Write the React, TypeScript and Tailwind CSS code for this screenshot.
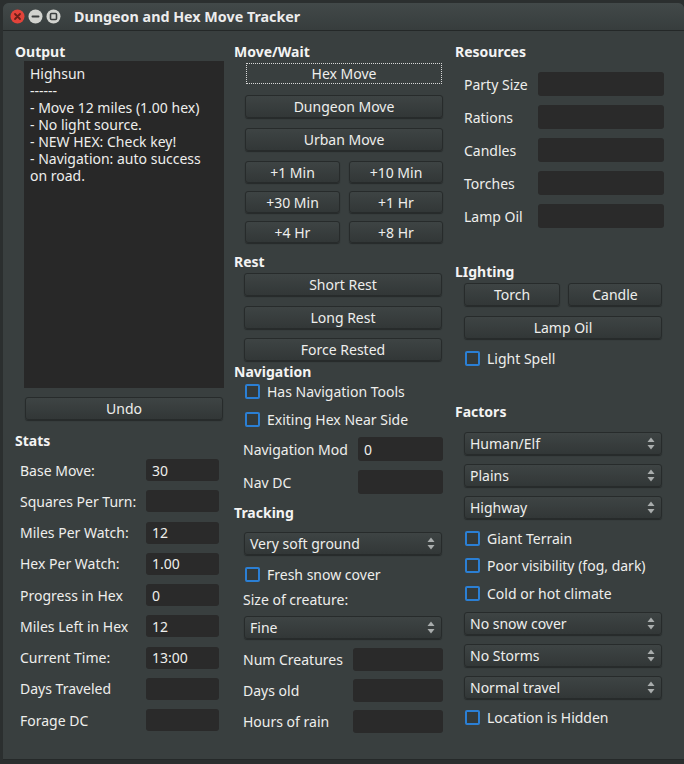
import React from "react";

const btn =
  "flex items-center justify-center rounded-[3px] border border-[#272b2b] bg-linear-to-b from-[#3e4444] to-[#323737] shadow-[0_1px_1px_rgba(0,0,0,0.35)] text-[14px] text-[#eeeeec]";

function Btn({ children, className = "" }: { children: React.ReactNode; className?: string }) {
  return <div className={`${btn} ${className}`}>{children}</div>;
}

function Arrows() {
  return (
    <svg width="8" height="13" viewBox="0 0 8 13">
      <polygon points="0.5,5 4,0.5 7.5,5" fill="#a9adad" />
      <polygon points="0.5,8 7.5,8 4,12.5" fill="#a9adad" />
    </svg>
  );
}

function Select({ children, className = "" }: { children: React.ReactNode; className?: string }) {
  return (
    <div
      className={`flex items-center justify-between h-[23px] w-[198px] ml-[10px] pl-[5px] pr-[6px] rounded-[3px] border border-[#272b2b] bg-linear-to-b from-[#3e4444] to-[#323737] shadow-[0_1px_1px_rgba(0,0,0,0.35)] text-[14px] text-[#eeeeec] ${className}`}
    >
      <span>{children}</span>
      <Arrows />
    </div>
  );
}

function Check({ children, className = "" }: { children: React.ReactNode; className?: string }) {
  return (
    <div className={`flex items-center h-[18px] ml-[11px] gap-[7px] text-[14px] ${className}`}>
      <span className="w-[15px] h-[15px] border-2 border-[#2b7fd4] rounded-[2px] bg-[#343a3a] shrink-0" />
      <span>{children}</span>
    </div>
  );
}

function Label({ children, className = "" }: { children: React.ReactNode; className?: string }) {
  return <div className={`h-[18px] leading-[18px] font-bold text-[14px] text-[#f3f3f3] ${className}`}>{children}</div>;
}

function Field({ value = "", className = "" }: { value?: string; className?: string }) {
  return (
    <div className={`flex items-center rounded-[3px] bg-[#2a2a2a] px-[6px] text-[14px] ${className}`}>{value}</div>
  );
}

export default function App() {
  const stats: [string, string][] = [
    ["Base Move:", "30"],
    ["Squares Per Turn:", ""],
    ["Miles Per Watch:", "12"],
    ["Hex Per Watch:", "1.00"],
    ["Progress in Hex", "0"],
    ["Miles Left in Hex", "12"],
    ["Current Time:", "13:00"],
    ["Days Traveled", ""],
    ["Forage DC", ""],
  ];
  const resources = ["Party Size", "Rations", "Candles", "Torches", "Lamp Oil"];
  return (
    <div className="w-[684px] h-[764px] bg-[#2b2f2f] pl-[3px] pt-[3px] font-['Noto_Sans',sans-serif] text-[#eeeeec] overflow-hidden">
      <div className="w-[681px] h-[757px] flex flex-col rounded-t-[6px] overflow-hidden bg-[#393f3f]">
        {/* title bar */}
        <div className="h-[27px] shrink-0 flex items-center bg-linear-to-b from-[#424949] to-[#373d3d]">
          <div className="flex items-center ml-[7px] gap-[3px]">
            <svg width="15" height="15" viewBox="0 0 15 15">
              <circle cx="7.5" cy="7.5" r="7" fill="#e2433a" />
              <path d="M5 5 L10 10 M10 5 L5 10" stroke="#6d1f18" strokeWidth="1.8" strokeLinecap="round" />
            </svg>
            <svg width="15" height="15" viewBox="0 0 15 15">
              <circle cx="7.5" cy="7.5" r="7" fill="#d2d3cf" />
              <path d="M4.5 7.5 L10.5 7.5" stroke="#3b3e3e" strokeWidth="2" strokeLinecap="round" />
            </svg>
            <svg width="15" height="15" viewBox="0 0 15 15">
              <circle cx="7.5" cy="7.5" r="7" fill="#d2d3cf" />
              <rect x="4.5" y="4.5" width="6" height="6" rx="1" fill="none" stroke="#3b3e3e" strokeWidth="1.6" />
            </svg>
          </div>
          <div className="ml-[13px] font-bold text-[14.3px] text-[#ececec]">Dungeon and Hex Move Tracker</div>
        </div>
        <div className="h-[1px] shrink-0 bg-[#242828]" />
        {/* body */}
        <div className="flex pl-[11px] pt-[12px] gap-[10px] text-[14px] flex-1 border-b border-[#252929]">
          {/* column 1 */}
          <div className="w-[210px] flex flex-col">
            <Label className="ml-[1px]">Output</Label>
            <div className="ml-[10px] w-[200px] h-[327px] bg-[#282828] pl-[6px] pr-[8px] pt-[4px] leading-[17px]">
              <div>Highsun</div>
              <div>------</div>
              <div>- Move 12 miles (1.00 hex)</div>
              <div>- No light source.</div>
              <div>- NEW HEX: Check key!</div>
              <div>- Navigation: auto success on road.</div>
            </div>
            <Btn className="mt-[9px] ml-[11px] w-[198px] h-[23px]">Undo</Btn>
            <Label className="mt-[12px] ml-[1px]">Stats</Label>
            <div className="mt-[9px] flex flex-col gap-[9.25px]">
              {stats.map(([l, v]) => (
                <div key={l} className="flex items-center h-[22px]">
                  <div className="w-[132px] pl-[6px]">{l}</div>
                  <Field value={v} className="w-[73px] h-[22px]" />
                </div>
              ))}
            </div>
          </div>
          {/* column 2 */}
          <div className="w-[210px] flex flex-col">
            <Label>Move/Wait</Label>
            <div className="mt-[1px] ml-[11px] w-[198px] h-[23px] p-[1px]">
              <div className="w-full h-full flex items-center justify-center border border-dotted border-[#d8d8d8]">
                Hex Move
              </div>
            </div>
            <Btn className="mt-[10px] ml-[11px] w-[198px] h-[23px]">Dungeon Move</Btn>
            <Btn className="mt-[10px] ml-[11px] w-[198px] h-[23px]">Urban Move</Btn>
            <div className="mt-[10px] ml-[11px] w-[198px] grid grid-cols-[95px_94px] gap-x-[9px] gap-y-[8px]">
              <Btn className="h-[22px]">+1 Min</Btn>
              <Btn className="h-[22px]">+10 Min</Btn>
              <Btn className="h-[22px]">+30 Min</Btn>
              <Btn className="h-[22px]">+1 Hr</Btn>
              <Btn className="h-[22px]">+4 Hr</Btn>
              <Btn className="h-[22px]">+8 Hr</Btn>
            </div>
            <Label className="mt-[10px]">Rest</Label>
            <Btn className="mt-[2px] ml-[10px] w-[198px] h-[23px]">Short Rest</Btn>
            <Btn className="mt-[10px] ml-[10px] w-[198px] h-[23px]">Long Rest</Btn>
            <Btn className="mt-[9px] ml-[10px] w-[198px] h-[23px]">Force Rested</Btn>
            <Label className="mt-[2px]">Navigation</Label>
            <Check className="mt-[1px]">Has Navigation Tools</Check>
            <Check className="mt-[10px]">Exiting Hex Near Side</Check>
            <div className="mt-[9px] ml-[9px] w-[200px] flex items-center justify-between h-[24px]">
              <span>Navigation Mod</span>
              <Field value="0" className="w-[85px] h-[24px]" />
            </div>
            <div className="mt-[9px] ml-[9px] w-[200px] flex items-center justify-between h-[24px]">
              <span>Nav DC</span>
              <Field className="w-[85px] h-[24px]" />
            </div>
            <Label className="mt-[10px]">Tracking</Label>
            <Select className="mt-[10px]">Very soft ground</Select>
            <Check className="mt-[10px]">Fresh snow cover</Check>
            <div className="mt-[8px] ml-[9px] h-[18px] leading-[18px]">Size of creature:</div>
            <Select className="mt-[7px]">Fine</Select>
            {["Num Creatures", "Days old", "Hours of rain"].map((l, i) => (
              <div
                key={l}
                className={`${i === 0 ? "mt-[9px]" : "mt-[8px]"} ml-[9px] w-[200px] flex items-center justify-between h-[23px]`}
              >
                <span>{l}</span>
                <Field className="w-[90px] h-[23px]" />
              </div>
            ))}
          </div>
          {/* column 3 */}
          <div className="w-[210px] flex flex-col">
            <Label className="ml-[1px]">Resources</Label>
            <div className="mt-[11px] flex flex-col gap-[9px]">
              {resources.map((r) => (
                <div key={r} className="ml-[10px] w-[200px] flex items-center justify-between h-[24px]">
                  <span>{r}</span>
                  <Field className="w-[126px] h-[24px]" />
                </div>
              ))}
            </div>
            <Label className="mt-[35px] ml-[1px]">LIghting</Label>
            <div className="mt-[2px] ml-[10px] w-[198px] grid grid-cols-[96px_94px] gap-x-[8px]">
              <Btn className="h-[23px]">Torch</Btn>
              <Btn className="h-[23px]">Candle</Btn>
            </div>
            <Btn className="mt-[10px] ml-[10px] w-[198px] h-[23px]">Lamp Oil</Btn>
            <Check className="mt-[10px]">Light Spell</Check>
            <Label className="mt-[36px] ml-[1px]">Factors</Label>
            <Select className="mt-[11px]">Human/Elf</Select>
            <Select className="mt-[9px]">Plains</Select>
            <Select className="mt-[9px]">Highway</Select>
            <Check className="mt-[10px]">Giant Terrain</Check>
            <Check className="mt-[9px]">Poor visibility (fog, dark)</Check>
            <Check className="mt-[10px]">Cold or hot climate</Check>
            <Select className="mt-[10px]">No snow cover</Select>
            <Select className="mt-[9px]">No Storms</Select>
            <Select className="mt-[9px]">Normal travel</Select>
            <Check className="mt-[9px]">Location is Hidden</Check>
          </div>
        </div>
      </div>
    </div>
  );
}
